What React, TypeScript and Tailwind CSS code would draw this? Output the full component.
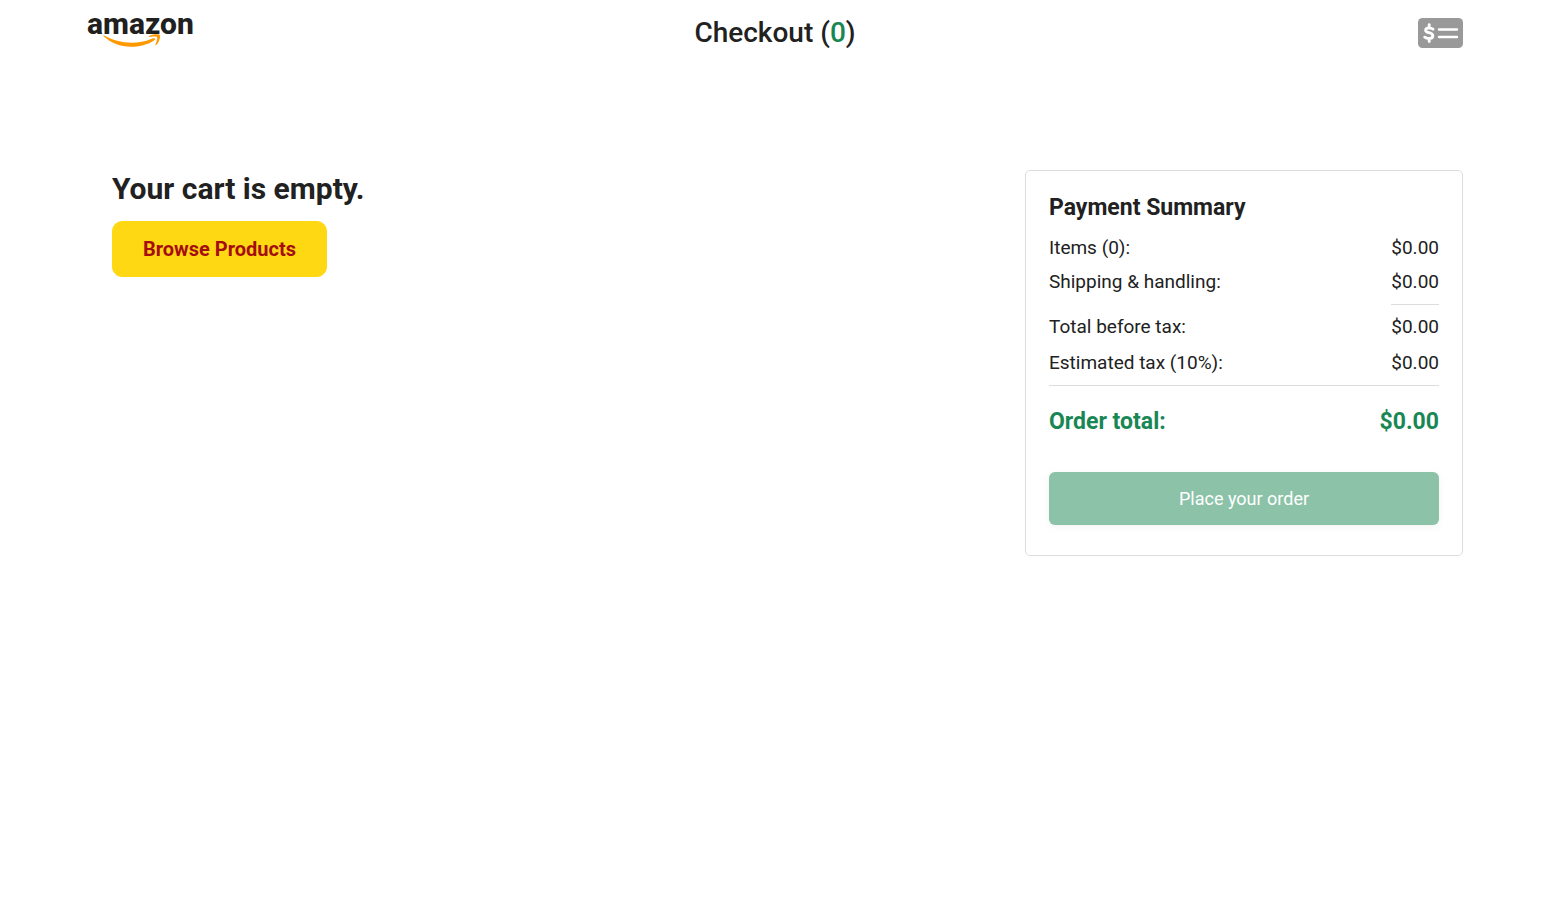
import React from "react";

const rows = [
  { label: "Items (0):", value: "$0.00", row: "h-[34px]", cell: "" },
  { label: "Shipping & handling:", value: "$0.00", row: "h-[45px]", cell: "border-b border-[#dddddd] pb-[10px]" },
  { label: "Total before tax:", value: "$0.00", row: "h-9", cell: "" },
  { label: "Estimated tax (10%):", value: "$0.00", row: "h-[38px]", cell: "" },
];

function AmazonLogo() {
  return (
    <svg viewBox="0 -10 116 52" className="h-[52px] w-[116px] overflow-visible" role="img" aria-label="amazon">
      <text x="0" y="21" fontSize="30" fontWeight="800" fill="#221f1f" fontFamily="Roboto, sans-serif">
        amazon
      </text>
      <path
        d="M67.500 27.200C61 31.800 51.500 33.800 44 33.800C33.300 33.800 23.800 29.800 16.600 23.300C16 22.800 16.500 22.100 17.200 22.500C25 27 34.600 29.700 44.500 29.700C51.200 29.700 58.600 28.300 65.400 25.400C67 24.700 69.500 25.800 67.500 27.200Z"
        fill="#ff9900"
      />
      <path
        d="M70 24.100C69.200 23 64.500 23.600 62.400 23.900C61.700 24 61.600 23.400 62.200 23C65.900 20.400 72.200 21.100 72.900 22C73.600 22.900 72.700 29.200 69.200 32.100C68.700 32.500 68.200 32.300 68.400 31.700C69.200 29.700 70.900 25.300 70 24.100Z"
        fill="#ff9900"
      />
    </svg>
  );
}

function MoneyCheckIcon() {
  return (
    <svg viewBox="0 0 45 30" className="h-[30px] w-[45px]" aria-hidden="true">
      <rect width="45" height="30" rx="4.500" fill="#999999" />
      <path
        d="M15 11.200C13.800 10.300 12.300 9.900 10.900 9.900C9 9.900 7.600 10.700 7.600 12.200C7.600 15.400 14.800 13.900 14.800 17.800C14.800 19.600 13.200 20.600 11 20.600C9.300 20.600 7.800 20.100 6.700 19.200M11.200 6.700V10M11.200 20.500V23.500"
        fill="none"
        stroke="#fff"
        strokeWidth="2.900"
        strokeLinecap="round"
      />
      <path d="M21 11.500H39M21 19H39" stroke="#fff" strokeWidth="2.400" strokeLinecap="round" />
    </svg>
  );
}

export default function App() {
  return (
    <div className="px-4 font-['Roboto',sans-serif] text-[#212121]">
      <div className="mx-auto max-w-[1376px]">
        <header className="grid h-[66px] grid-cols-3 items-center">
          <a href="#home" className="justify-self-start pb-2">
            <AmazonLogo />
          </a>
          <h1 className="justify-self-center text-[28px] leading-8 font-medium">
            Checkout (<a href="#cart" className="text-[#198754]">0</a>)
          </h1>
          <span className="justify-self-end">
            <MoneyCheckIcon />
          </span>
        </header>

        <main className="flex flex-wrap items-start justify-between gap-6 pt-[104px]">
          <section className="pl-[25px]">
            <h2 className="pt-px text-[30px] leading-9 font-bold">Your cart is empty.</h2>
            <a
              href="#products"
              className="mt-[14px] inline-flex h-14 items-center rounded-[10px] border border-[#ffd814] bg-[#ffd814] px-[30px] text-xl font-bold text-[#a50e0e]"
            >
              Browse Products
            </a>
          </section>

          <section className="w-full max-w-[438px] rounded-[5px] border border-[#dddddd] px-[23px] pt-[23px] pb-[30px]">
            <h2 className="mb-[10px] text-[23px] leading-7 font-bold">Payment Summary</h2>
            <dl className="text-[19px] leading-6">
              {rows.map((r) => (
                <div key={r.label} className={`flex items-start justify-between pt-1 ${r.row}`}>
                  <dt>{r.label}</dt>
                  <dd className={r.cell}>{r.value}</dd>
                </div>
              ))}
              <div className="flex justify-between border-t border-[#dddddd] pt-[22px] text-[23px] leading-7 font-bold text-[#198754]">
                <dt>Order total:</dt>
                <dd>$0.00</dd>
              </div>
            </dl>
            <button
              type="button"
              disabled
              className="mt-9 h-[53px] w-full rounded-md bg-[#198754] text-lg text-white opacity-50 shadow-[0_2px_5px_rgba(213,217,217,0.5)]"
            >
              Place your order
            </button>
          </section>
        </main>
      </div>
    </div>
  );
}
